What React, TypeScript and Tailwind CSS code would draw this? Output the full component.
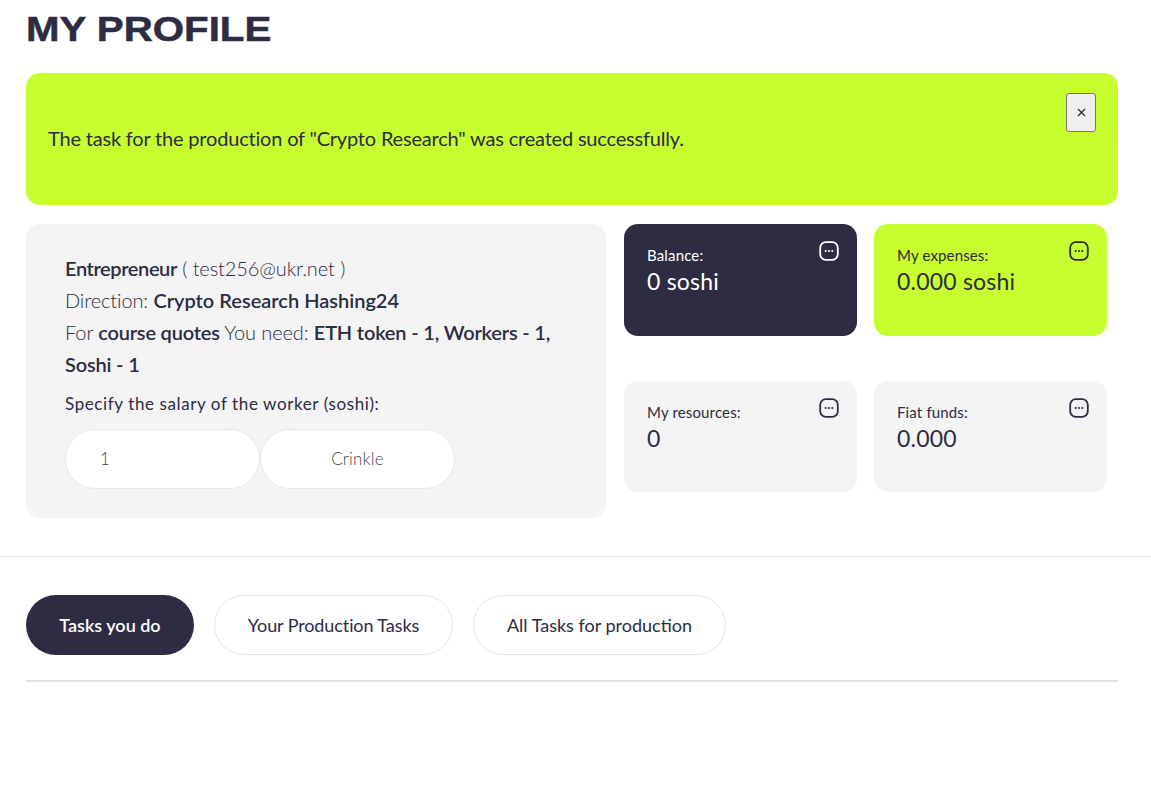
import { X } from 'lucide-react';

const font = { fontFamily: 'Lato, "Noto Sans", sans-serif' };

const DotsIcon = ({ className }: { className: string }) => (
    <svg viewBox="0 0 20 20" width="20" height="20" fill="none" className={className}>
        <rect x="1.2" y="1.2" width="17.6" height="17.6" rx="5.5" stroke="currentColor" strokeWidth="1.8" />
        <circle cx="6.7" cy="10" r="1.1" fill="currentColor" />
        <circle cx="10" cy="10" r="1.1" fill="currentColor" />
        <circle cx="13.3" cy="10" r="1.1" fill="currentColor" />
    </svg>
);

type StatProps = { label: string; value: string; card: string; text: string };

const StatCard = ({ label, value, card, text }: StatProps) => (
    <div className={`w-[233px] rounded-[14px] pl-[23px] pr-[18px] pt-[16px] flex justify-between items-start ${card} ${text}`}>
        <div>
            <div className="text-[15px] leading-[30px] font-normal tracking-[0.15px]">{label}</div>
            <div className="text-[23px] leading-[22px] font-normal tracking-[0.2px]">{value}</div>
        </div>
        <DotsIcon className="mt-[1px]" />
    </div>
);

const App = () => {
    return (
        <div className="bg-white min-h-[808px] overflow-hidden text-[#2d2c43]" style={font}>
            <div className="pl-[26px] pr-[33px]">
                <h1
                    className="text-[35px] leading-[58px] font-bold text-[#2d2c43] origin-left scale-x-[1.15]"
                    style={{ fontFamily: '"Liberation Sans", sans-serif', WebkitTextStroke: '0.5px #2d2c43' }}
                >
                    MY PROFILE
                </h1>

                {/* Alert */}
                <div className="mt-[15px] h-[132px] rounded-[14px] bg-[#c6fe2f] pl-[22px] pr-[22px] pt-[20px] flex justify-between items-start">
                    <p className="mt-[32px] text-[20px] leading-[26px] font-normal text-[#2d2c43] tracking-[-0.19px]">
                        The task for the production of "Crypto Research" was created successfully.
                    </p>
                    <button className="w-[30px] h-[39px] bg-[#efefef] border border-[#767676] rounded-[3px] flex items-center justify-center text-[#222]">
                        <X size={13} strokeWidth={2} />
                    </button>
                </div>

                {/* Profile + stats */}
                <div className="mt-[19px] flex gap-[18px] items-start">
                    <div className="w-[580px] h-[294px] rounded-[14px] bg-[#f4f4f4] pl-[39px] pr-[39px] pt-[28px]">
                        <div className="text-[20px] leading-[32px] font-light tracking-[-0.1px]">
                            <b className="font-semibold tracking-[-0.4px]">Entrepreneur</b> ( test256@ukr.net )
                            <br />
                            Direction: <b className="font-semibold tracking-[0px]">Crypto Research Hashing24</b>
                            <br />
                            For <b className="font-semibold tracking-[-0.2px]">course quotes</b> You need: <b className="font-semibold tracking-[-0.18px]">ETH token - 1, Workers - 1, Soshi - 1</b>
                        </div>
                        <div className="mt-[11px] text-[17px] leading-[26px] font-normal tracking-[0.6px]">Specify the salary of the worker (soshi):</div>
                        <div className="mt-[12px] flex">
                            <div className="w-[195px] h-[60px] rounded-full bg-white border border-[#e9e9e9] pl-[34px] flex items-center text-[17px] font-light text-[#45454f]">
                                1
                            </div>
                            <button className="w-[195px] h-[60px] rounded-full bg-white border border-[#e9e9e9] flex items-center justify-center text-[17px] font-light text-[#45454f] tracking-[0.2px]">
                                Crinkle
                            </button>
                        </div>
                    </div>

                    <div className="grid grid-cols-[233px_233px] gap-x-[17px] gap-y-[45px]">
                        <StatCard label="Balance:" value="0 soshi" card="h-[112px] bg-[#2d2c43]" text="text-white" />
                        <StatCard label="My expenses:" value="0.000 soshi" card="h-[112px] bg-[#c6fe2f]" text="text-[#2d2c43]" />
                        <StatCard label="My resources:" value="0" card="h-[111px] bg-[#f4f4f4]" text="text-[#2d2c43]" />
                        <StatCard label="Fiat funds:" value="0.000" card="h-[111px] bg-[#f4f4f4]" text="text-[#2d2c43]" />
                    </div>
                </div>
            </div>

            <div className="mt-[38px] h-px bg-[#e4e4e4]" />

            {/* Tabs */}
            <div className="pl-[26px] pr-[33px]">
                <div className="mt-[38px] flex gap-[20px]">
                    <button className="w-[168px] h-[60px] rounded-full bg-[#2d2c43] text-white text-[18px] font-semibold tracking-[0px]">Tasks you do</button>
                    <button className="w-[239px] h-[60px] rounded-full bg-white border border-[#e6e6e6] text-[18px] font-normal tracking-[-0.1px]">Your Production Tasks</button>
                    <button className="w-[253px] h-[60px] rounded-full bg-white border border-[#e6e6e6] text-[18px] font-normal tracking-[0px]">All Tasks for production</button>
                </div>
                <div className="mt-[25px] h-[2px] bg-[#e2e2e2]" />
            </div>
        </div>
    );
};

export default App;
